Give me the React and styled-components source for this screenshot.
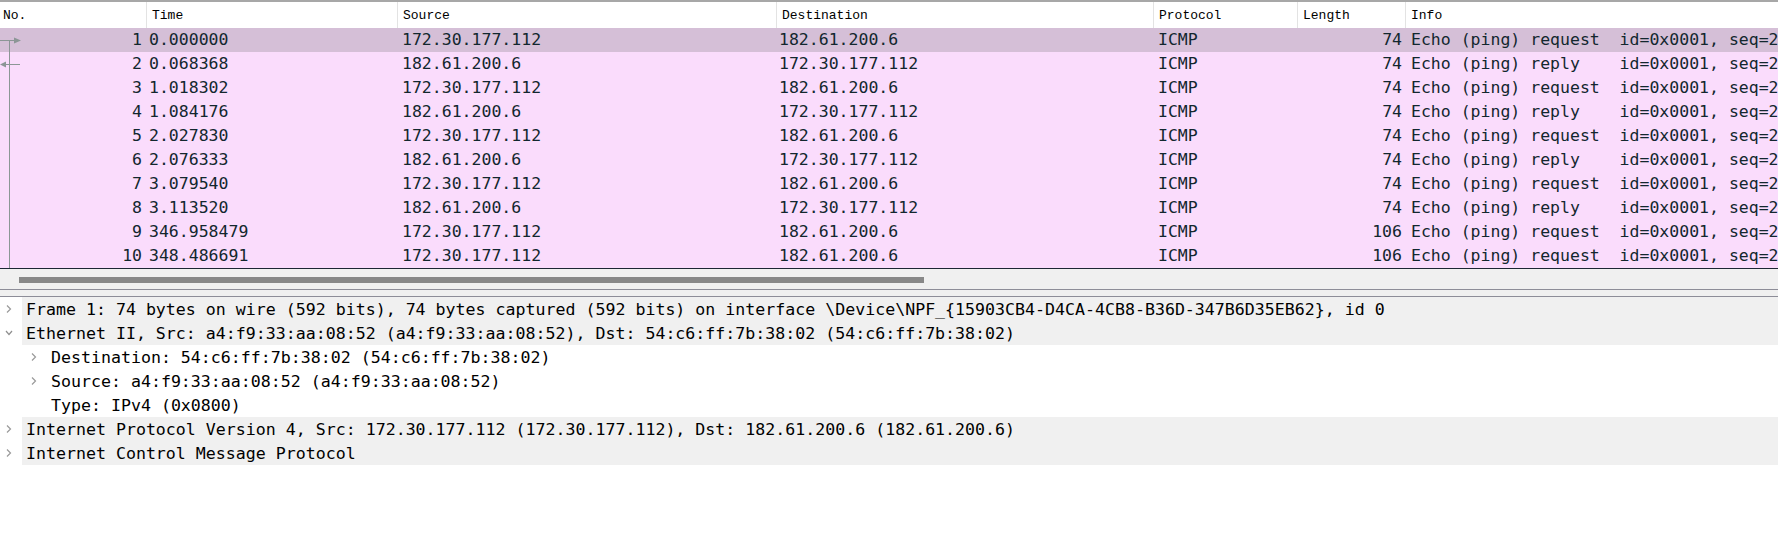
import React from 'react';
import styled, { createGlobalStyle } from 'styled-components';

const packets = [
  { no: 1, time: '0.000000', src: '172.30.177.112', dst: '182.61.200.6', len: 74, info: 'Echo (ping) request  id=0x0001, seq=21/5376, ttl=64 (reply in 2)', selected: true },
  { no: 2, time: '0.068368', src: '182.61.200.6', dst: '172.30.177.112', len: 74, info: 'Echo (ping) reply    id=0x0001, seq=21/5376, ttl=52 (request in 1)' },
  { no: 3, time: '1.018302', src: '172.30.177.112', dst: '182.61.200.6', len: 74, info: 'Echo (ping) request  id=0x0001, seq=22/5632, ttl=64 (reply in 4)' },
  { no: 4, time: '1.084176', src: '182.61.200.6', dst: '172.30.177.112', len: 74, info: 'Echo (ping) reply    id=0x0001, seq=22/5632, ttl=52 (request in 3)' },
  { no: 5, time: '2.027830', src: '172.30.177.112', dst: '182.61.200.6', len: 74, info: 'Echo (ping) request  id=0x0001, seq=23/5888, ttl=64 (reply in 6)' },
  { no: 6, time: '2.076333', src: '182.61.200.6', dst: '172.30.177.112', len: 74, info: 'Echo (ping) reply    id=0x0001, seq=23/5888, ttl=52 (request in 5)' },
  { no: 7, time: '3.079540', src: '172.30.177.112', dst: '182.61.200.6', len: 74, info: 'Echo (ping) request  id=0x0001, seq=24/6144, ttl=64 (reply in 8)' },
  { no: 8, time: '3.113520', src: '182.61.200.6', dst: '172.30.177.112', len: 74, info: 'Echo (ping) reply    id=0x0001, seq=24/6144, ttl=52 (request in 7)' },
  { no: 9, time: '346.958479', src: '172.30.177.112', dst: '182.61.200.6', len: 106, info: 'Echo (ping) request  id=0x0001, seq=25/6400, ttl=64 (no response found!)' },
  { no: 10, time: '348.486691', src: '172.30.177.112', dst: '182.61.200.6', len: 106, info: 'Echo (ping) request  id=0x0001, seq=26/6656, ttl=64 (no response found!)' },
];

const tree = [
  { text: 'Frame 1: 74 bytes on wire (592 bits), 74 bytes captured (592 bits) on interface \\Device\\NPF_{15903CB4-D4CA-4CB8-B36D-347B6D35EB62}, id 0', level: 0, arrow: 'closed' },
  { text: 'Ethernet II, Src: a4:f9:33:aa:08:52 (a4:f9:33:aa:08:52), Dst: 54:c6:ff:7b:38:02 (54:c6:ff:7b:38:02)', level: 0, arrow: 'open' },
  { text: 'Destination: 54:c6:ff:7b:38:02 (54:c6:ff:7b:38:02)', level: 1, arrow: 'closed' },
  { text: 'Source: a4:f9:33:aa:08:52 (a4:f9:33:aa:08:52)', level: 1, arrow: 'closed' },
  { text: 'Type: IPv4 (0x0800)', level: 1 },
  { text: 'Internet Protocol Version 4, Src: 172.30.177.112 (172.30.177.112), Dst: 182.61.200.6 (182.61.200.6)', level: 0, arrow: 'closed' },
  { text: 'Internet Control Message Protocol', level: 0, arrow: 'closed' },
];

const GlobalStyle = createGlobalStyle`
  html, body {
    margin: 0;
    padding: 0;
    background: #ffffff;
  }
`;

const COLS = '146px 251px 379px 377px 144px 108px 1fr';

const Window = styled.div`
  width: 1778px;
  height: 549px;
  overflow: hidden;
  background: #ffffff;
  font-family: 'DejaVu Sans Mono', 'Liberation Mono', monospace;
`;

const HeaderRow = styled.div`
  display: grid;
  grid-template-columns: ${COLS};
  height: 26px;
  border-top: 2px solid #a7a7a7;
  background: #ffffff;
`;

const HeaderCell = styled.div`
  display: flex;
  align-items: center;
  padding-left: ${(p) => (p.$first ? 3 : 5)}px;
  border-left: ${(p) => (p.$first ? 'none' : '1px solid #e3e3e3')};
  font-family: 'Liberation Mono', monospace;
  font-size: 13px;
  color: #000;
  white-space: nowrap;
  overflow: hidden;
`;

const ListBody = styled.div`
  position: relative;
  border-bottom: 1px solid #1c2633;
`;

const PacketRow = styled.div`
  display: grid;
  grid-template-columns: ${COLS};
  height: 24px;
  line-height: 24px;
  font-size: 16.5px;
  color: #12272e;
  background: ${(p) => (p.$selected ? '#d5bfd7' : '#fadcfc')};
`;

const Cell = styled.div`
  white-space: pre;
  overflow: hidden;
  text-align: ${(p) => (p.$right ? 'right' : 'left')};
  padding-left: ${(p) => p.$pl || 0}px;
  padding-right: ${(p) => p.$pr || 0}px;
`;

const Related = styled.svg`
  position: absolute;
  left: 0;
  top: 0;
  pointer-events: none;
`;

const HScroll = styled.div`
  height: 21px;
  background: #f0f0f0;
  padding: 8px 0 0 19px;
  box-sizing: border-box;
  border-bottom: 1px solid #8d8d98;
`;

const Thumb = styled.div`
  width: 905px;
  height: 6px;
  background: #888888;
`;

const Splitter = styled.div`
  height: 6px;
  background: #f0f0f0;
  border-bottom: 1px solid #8d8d98;
`;

const TreeRow = styled.div`
  display: flex;
  align-items: center;
  height: 24px;
  font-size: 16.6px;
  color: #000;
  white-space: pre;
  background: linear-gradient(
    to right,
    #ffffff 22px,
    ${(p) => (p.$shade ? '#f0f0f0' : '#ffffff')} 22px
  );
`;

const Indent = styled.div`
  width: ${(p) => p.$w}px;
  flex: none;
  display: flex;
  justify-content: flex-end;
  padding-right: 13px;
  box-sizing: border-box;
`;

const Chevron = ({ open }) => (
  <svg width="8" height="10" viewBox="0 0 8 10">
    {open ? (
      <polyline points="1,3 4,6.5 7,3" fill="none" stroke="#8f8f8f" strokeWidth="1.2" />
    ) : (
      <polyline points="2,1.5 5.5,5 2,8.5" fill="none" stroke="#9a9a9a" strokeWidth="1.2" />
    )}
  </svg>
);

const App = () => {
  return (
    <Window>
      <GlobalStyle />
      <HeaderRow>
        <HeaderCell $first>No.</HeaderCell>
        <HeaderCell>Time</HeaderCell>
        <HeaderCell>Source</HeaderCell>
        <HeaderCell>Destination</HeaderCell>
        <HeaderCell>Protocol</HeaderCell>
        <HeaderCell>Length</HeaderCell>
        <HeaderCell>Info</HeaderCell>
      </HeaderRow>
      <ListBody>
        {packets.map((p) => (
          <PacketRow key={p.no} $selected={p.selected}>
            <Cell $right $pr={4}>{p.no}</Cell>
            <Cell $pl={3}>{p.time}</Cell>
            <Cell $pl={5}>{p.src}</Cell>
            <Cell $pl={3}>{p.dst}</Cell>
            <Cell $pl={5}>ICMP</Cell>
            <Cell $right $pr={3}>{p.len}</Cell>
            <Cell $pl={6}>{p.info}</Cell>
          </PacketRow>
        ))}
        <Related width="24" height="240" viewBox="0 0 24 240">
          <g stroke="#8c9696" strokeWidth="1" fill="none">
            <line x1="9.5" y1="12" x2="9.5" y2="240" />
            <line x1="0" y1="12.5" x2="15" y2="12.5" />
            <line x1="5" y1="36.5" x2="20" y2="36.5" />
          </g>
          <polygon points="14,9.5 21,12.5 14,15.5" fill="#8c9696" />
          <polygon points="0,36.5 6,33.5 6,39.5" fill="#8c9696" />
        </Related>
      </ListBody>
      <HScroll>
        <Thumb />
      </HScroll>
      <Splitter />
      {tree.map((t, i) => (
        <TreeRow key={i} $shade={t.level === 0}>
          <Indent $w={t.level === 0 ? 26 : 51}>
            {t.arrow && <Chevron open={t.arrow === 'open'} />}
          </Indent>
          {t.text}
        </TreeRow>
      ))}
    </Window>
  );
};

export default App;
